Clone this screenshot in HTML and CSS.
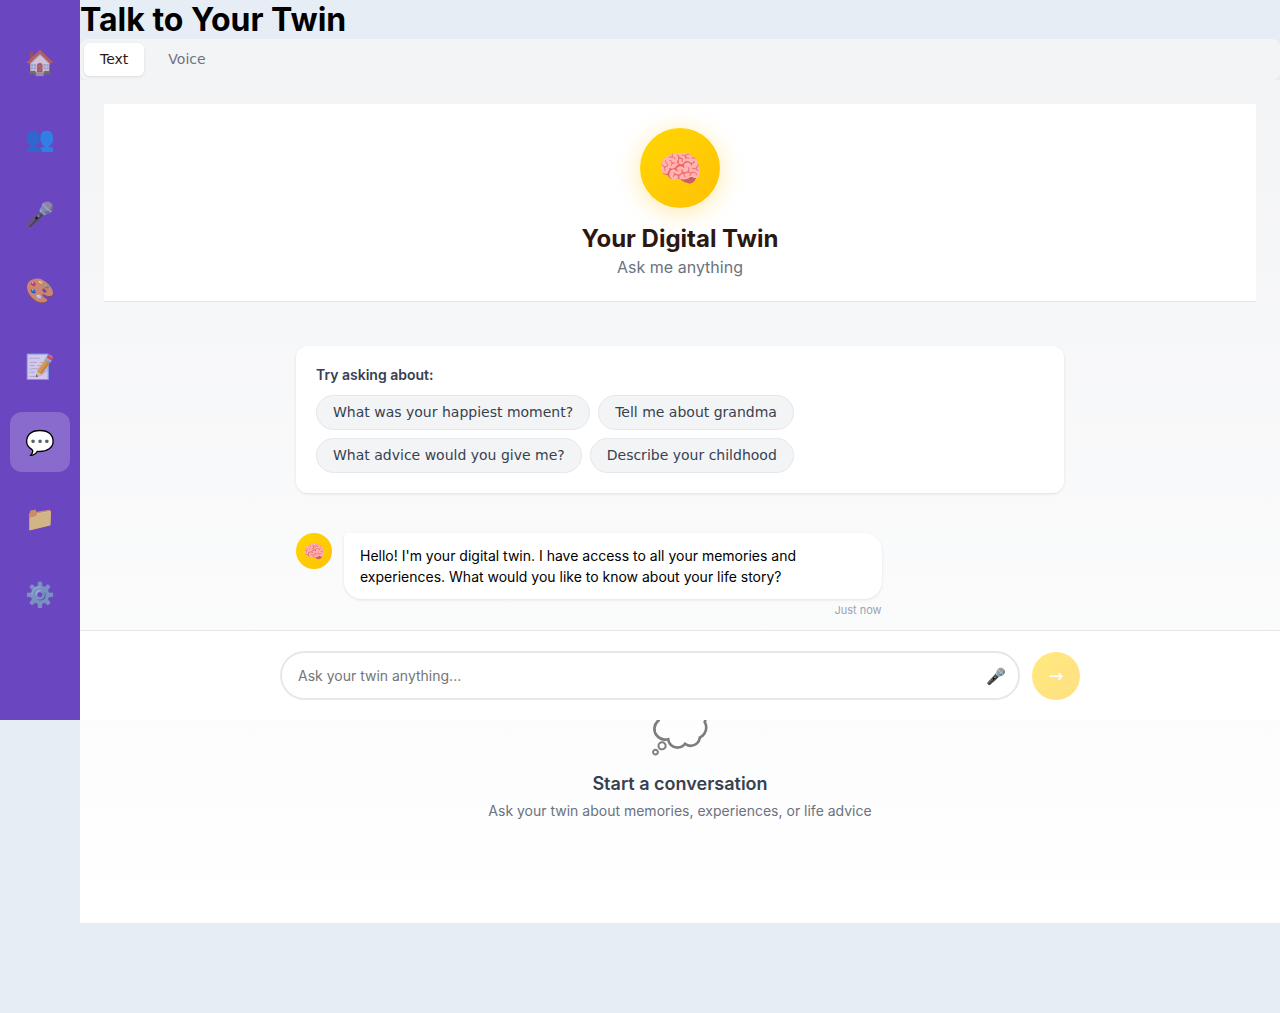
FILE: index.html
```html
<!DOCTYPE html>
<html lang="en">
<head>
<meta charset="utf-8">
<title>Talk to Your Twin</title>
<link rel="stylesheet" href="styles.css">
</head>
<body>
<div class="app">
  <nav class="sidebar">
    <a class="nav-item">🏠</a>
    <a class="nav-item">👥</a>
    <a class="nav-item">🎤</a>
    <a class="nav-item">🎨</a>
    <a class="nav-item">📝</a>
    <a class="nav-item active">💬</a>
    <a class="nav-item">📁</a>
    <a class="nav-item">⚙️</a>
  </nav>
  <main class="main">
    <h1 class="title">Talk to Your Twin</h1>
    <div class="tabs">
      <button class="tab selected">Text</button>
      <button class="tab">Voice</button>
    </div>
    <section class="chat">
      <header class="hero">
        <div class="avatar">🧠</div>
        <h2 class="hero-name">Your Digital Twin</h2>
        <p class="hero-status">Ask me anything</p>
      </header>
      <div class="suggestions">
        <h3 class="suggest-title">Try asking about:</h3>
        <div class="chips">
          <button class="chip">What was your happiest moment?</button>
          <button class="chip">Tell me about grandma</button>
          <button class="chip">What advice would you give me?</button>
          <button class="chip">Describe your childhood</button>
        </div>
      </div>
      <div class="message">
        <div class="message-avatar">🧠</div>
        <div class="message-body">
          <div class="bubble">Hello! I'm your digital twin. I have access to all your memories and experiences. What would you like to know about your life story?</div>
          <div class="time">Just now</div>
        </div>
      </div>
      <div class="empty">
        <div class="empty-icon">💭</div>
        <h3 class="empty-title">Start a conversation</h3>
        <p class="empty-text">Ask your twin about memories, experiences, or life advice</p>
      </div>
    </section>
  </main>
  <div class="composer">
    <div class="field">
      <input class="input" placeholder="Ask your twin anything...">
      <button class="mic">🎤</button>
    </div>
    <button class="send">→</button>
  </div>
</div>
</body>
</html>
```
FILE: styles.css
```css
* { box-sizing: border-box; margin: 0; padding: 0; }
body { font-family: Inter, sans-serif; background: #e6edf5; color: #000; }
button { font-family: "DejaVu Sans", sans-serif; border: 0; background: none; }
.app { position: relative; display: flex; align-items: flex-start; min-height: 1013px; }
.sidebar { width: 80px; height: 720px; padding-top: 32px; background: #6b46c1; display: flex; flex-direction: column; align-items: center; gap: 16px; }
.nav-item { width: 60px; height: 60px; border-radius: 12px; display: flex; align-items: center; justify-content: center; font-size: 24px; opacity: .7; }
.nav-item.active { background: rgba(255,255,255,.2); opacity: 1; }
.main { flex: 1; }
.title { font-size: 32px; line-height: 39px; font-weight: 700; }
.tabs { display: flex; gap: 8px; height: 41px; padding: 4px; background: #f3f4f6; border-radius: 8px; }
.tab { height: 33px; padding: 0 16px 2px; font-size: 14px; color: #6b7280; border-radius: 6px; }
.tab.selected { background: #fff; color: #2c1810; box-shadow: 0 1px 3px rgba(0,0,0,.1); }
.chat { height: 843px; padding: 24px; background: linear-gradient(180deg, #f3f4f6, #fff); }
.hero { height: 198px; padding-top: 24px; background: #fff; border-bottom: 1px solid #e5e7eb; text-align: center; }
.avatar { width: 80px; height: 80px; margin: 0 auto 16px; border-radius: 50%; background: linear-gradient(135deg, #ffd700, #ffc107); box-shadow: 0 4px 24px rgba(255,193,7,.35); display: flex; align-items: center; justify-content: center; font-size: 36px; }
.hero-name { font-size: 24px; line-height: 29px; margin-bottom: 4px; color: #2c1810; }
.hero-status { font-size: 16px; line-height: 20px; color: #6b7280; }
.suggestions { width: 768px; height: 147px; margin: 44px auto 40px; padding: 20px; background: #fff; border-radius: 12px; box-shadow: 0 1px 3px rgba(0,0,0,.1); }
.suggest-title { font-size: 14px; line-height: 17px; font-weight: 600; margin-bottom: 12px; color: #374151; }
.chips { display: flex; flex-wrap: wrap; gap: 8px; width: 500px; }
.chip { height: 35px; padding: 0 16px 2px; border: 1px solid #e5e7eb; border-radius: 20px; background: #f3f4f6; color: #374151; font-size: 14px; }
.message { width: 768px; margin: 0 auto; display: flex; gap: 12px; }
.message-avatar { width: 36px; height: 36px; border-radius: 50%; background: linear-gradient(135deg, #ffd700, #ffc107); display: flex; align-items: center; justify-content: center; font-size: 18px; }
.message-body { width: 537.6px; }
.bubble { padding: 12px 16px; background: #fff; border-radius: 4px 18px 18px 18px; box-shadow: 0 1px 3px rgba(0,0,0,.1); font-size: 14px; line-height: 21px; }
.time { margin-top: 4px; font-size: 11px; line-height: 14px; color: #9ca3af; text-align: right; }
.empty { padding-top: 81px; text-align: center; }
.empty-icon { font-size: 48px; line-height: 58px; margin-bottom: 17px; opacity: .5; }
.empty-title { font-size: 18px; line-height: 22px; font-weight: 600; color: #374151; margin-bottom: 7px; }
.empty-text { font-size: 14px; line-height: 17px; color: #6b7280; }
.composer { position: absolute; left: 80px; right: 0; top: 630px; height: 90px; padding-top: 20px; border-top: 1px solid #e5e7eb; background: #fff; display: flex; justify-content: center; align-items: flex-start; gap: 12px; }
.field { width: 740px; height: 49px; border: 2px solid #e5e7eb; border-radius: 25px; display: flex; align-items: center; padding: 0 12px 0 16px; }
.input { flex: 1; border: 0; outline: 0; background: none; font: 14px Inter, sans-serif; }
.mic { padding-top: 2px; font-size: 16px; }
.send { width: 48px; height: 48px; margin-top: 1px; padding-bottom: 2px; border-radius: 50%; background: linear-gradient(135deg, #ffd700, #ffc107); color: #fff; font-size: 18px; opacity: .5; }
```
